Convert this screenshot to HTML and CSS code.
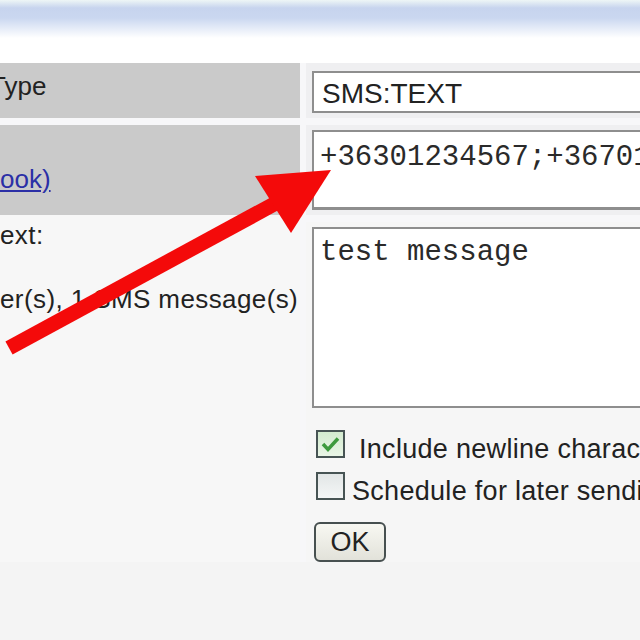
FILE: index.html
```html
<!DOCTYPE html>
<html lang="en">
<head>
  <meta charset="UTF-8">
  <title>Send SMS</title>
  <link rel="stylesheet" href="styles.css">
</head>
<body>

  <!-- TOP BAR -->
  <div class="topbar"></div>

  <!-- SEND FORM -->
  <div class="sms-form">
    <div class="label cell-grey"><span class="type-label">Type</span></div>
    <div class="field">
      <input class="text-input" type="text" value="SMS:TEXT">
    </div>

    <div class="label cell-grey label-low"><a href="#">ook)</a></div>
    <div class="field field-tight">
      <textarea class="mono-input recipients">+36301234567;+36701234567</textarea>
    </div>

    <div class="label cell-light">
      <div class="line">ext:</div>
      <div class="line counter">er(s), 1 SMS message(s)</div>
    </div>
    <div class="field field-tight field-light">
      <textarea class="mono-input message">test message</textarea>

      <div class="options">
        <label class="option option-wide">
          <span class="box checked">
            <svg width="25" height="25" viewBox="0 0 25 25"><path d="M5 12 L10 17.5 L20 6.5" fill="none" stroke="#3d9a3d" stroke-width="3.5"/></svg>
          </span>
          <span class="option-text">Include newline characters</span>
        </label>
        <label class="option">
          <span class="box"></span>
          <span class="option-text">Schedule for later sending</span>
        </label>
      </div>

      <button class="btn-ok">OK</button>
    </div>
  </div>

  <!-- ARROW -->
  <svg class="arrow" width="640" height="640" viewBox="0 0 640 640">
    <line x1="9" y1="348" x2="276" y2="203" stroke="#f40a0a" stroke-width="15"/>
    <polygon points="255,176 331,170 291,233" fill="#f40a0a"/>
  </svg>

</body>
</html>
```

FILE: styles.css
```css
/* ===== PAGE ===== */
html, body {
  overflow: hidden;
}
body {
  margin: 0;
  width: 640px;
  height: 640px;
  position: relative;
  background: #f4f4f4;
  font-family: "Liberation Sans", Arial, sans-serif;
  color: #222;
}

/* ===== TOP BAR ===== */
.topbar {
  height: 63px;
  background: linear-gradient(#eef6f6 0, #c7d4ee 8px, #cad7f0 18px, #ffffff 38px, #ffffff 63px);
}

/* ===== FORM GRID ===== */
.sms-form {
  display: grid;
  grid-template-columns: 300px 560px;
  grid-template-rows: 55px 90px auto;
  column-gap: 6px;
  row-gap: 7px;
  background: #f7f7f9;
  width: 866px;
}
.label {
  font-size: 26px;
  line-height: 30px;
  padding-top: 8px;
  white-space: nowrap;
  overflow: hidden;
}
.cell-grey {
  background: #cacaca;
}
.cell-light {
  background: #f7f7f7;
}
.type-label {
  margin-left: -10px;
}
.label-low {
  padding-top: 39px;
}
.label a {
  color: #2b2fa6;
}
.label .line {
  letter-spacing: 0.4px;
}
.counter {
  margin-top: 34px;
}
.sms-form .label.cell-light {
  padding-top: 5px;
  margin-top: -7px;
}

/* ===== FIELDS ===== */
.field {
  background: #efeff1;
  padding: 8px 0 0 6px;
}
.field-tight {
  padding-top: 5px;
}
.field.field-light {
  background: #f6f6f6;
}
.text-input {
  display: block;
  box-sizing: border-box;
  width: 520px;
  height: 42px;
  margin: 0;
  padding: 4px 8px 0;
  border: 2px solid #8e8e8e;
  background: #fff;
  font-family: "Liberation Sans", Arial, sans-serif;
  font-size: 28px;
  color: #222;
}
.mono-input {
  display: block;
  box-sizing: border-box;
  width: 520px;
  margin: 0;
  padding: 8px 6px;
  border: 2px solid #8e8e8e;
  background: #fff;
  font-family: "Liberation Mono", "Courier New", monospace;
  font-size: 29px;
  line-height: 35px;
  color: #2a2a2a;
  resize: none;
  overflow: hidden;
  white-space: pre;
}
.recipients {
  height: 80px;
  border-bottom-width: 3px;
}
.message {
  height: 181px;
  padding-top: 6px;
}

/* ===== OPTIONS ===== */
.options {
  margin-top: 22px;
  display: flex;
  flex-direction: column;
  gap: 14px;
}
.option {
  display: flex;
  align-items: flex-end;
  gap: 7px;
  padding-left: 4px;
  white-space: nowrap;
}
.option-wide {
  gap: 14px;
}
.box {
  box-sizing: border-box;
  width: 29px;
  height: 28px;
  border: 2px solid #475454;
  background: linear-gradient(#e2e6e6, #f4f6f6);
  display: flex;
  align-items: center;
  justify-content: center;
}
.box.checked {
  background: linear-gradient(#d3ebcf, #e9f5e6);
}
.option-text {
  font-size: 27px;
  line-height: 27px;
  margin-bottom: -5px;
  letter-spacing: 0.3px;
}

/* ===== BUTTON ===== */
.btn-ok {
  display: block;
  margin: 22px 0 0 2px;
  width: 72px;
  height: 40px;
  padding: 0;
  border: 2px solid #475050;
  border-radius: 6px;
  background: linear-gradient(#f8f8f2, #e2e2da);
  font-family: "Liberation Sans", Arial, sans-serif;
  font-size: 27px;
  color: #222;
}

/* ===== ARROW OVERLAY ===== */
.arrow {
  position: absolute;
  left: 0;
  top: 0;
  pointer-events: none;
}
```
